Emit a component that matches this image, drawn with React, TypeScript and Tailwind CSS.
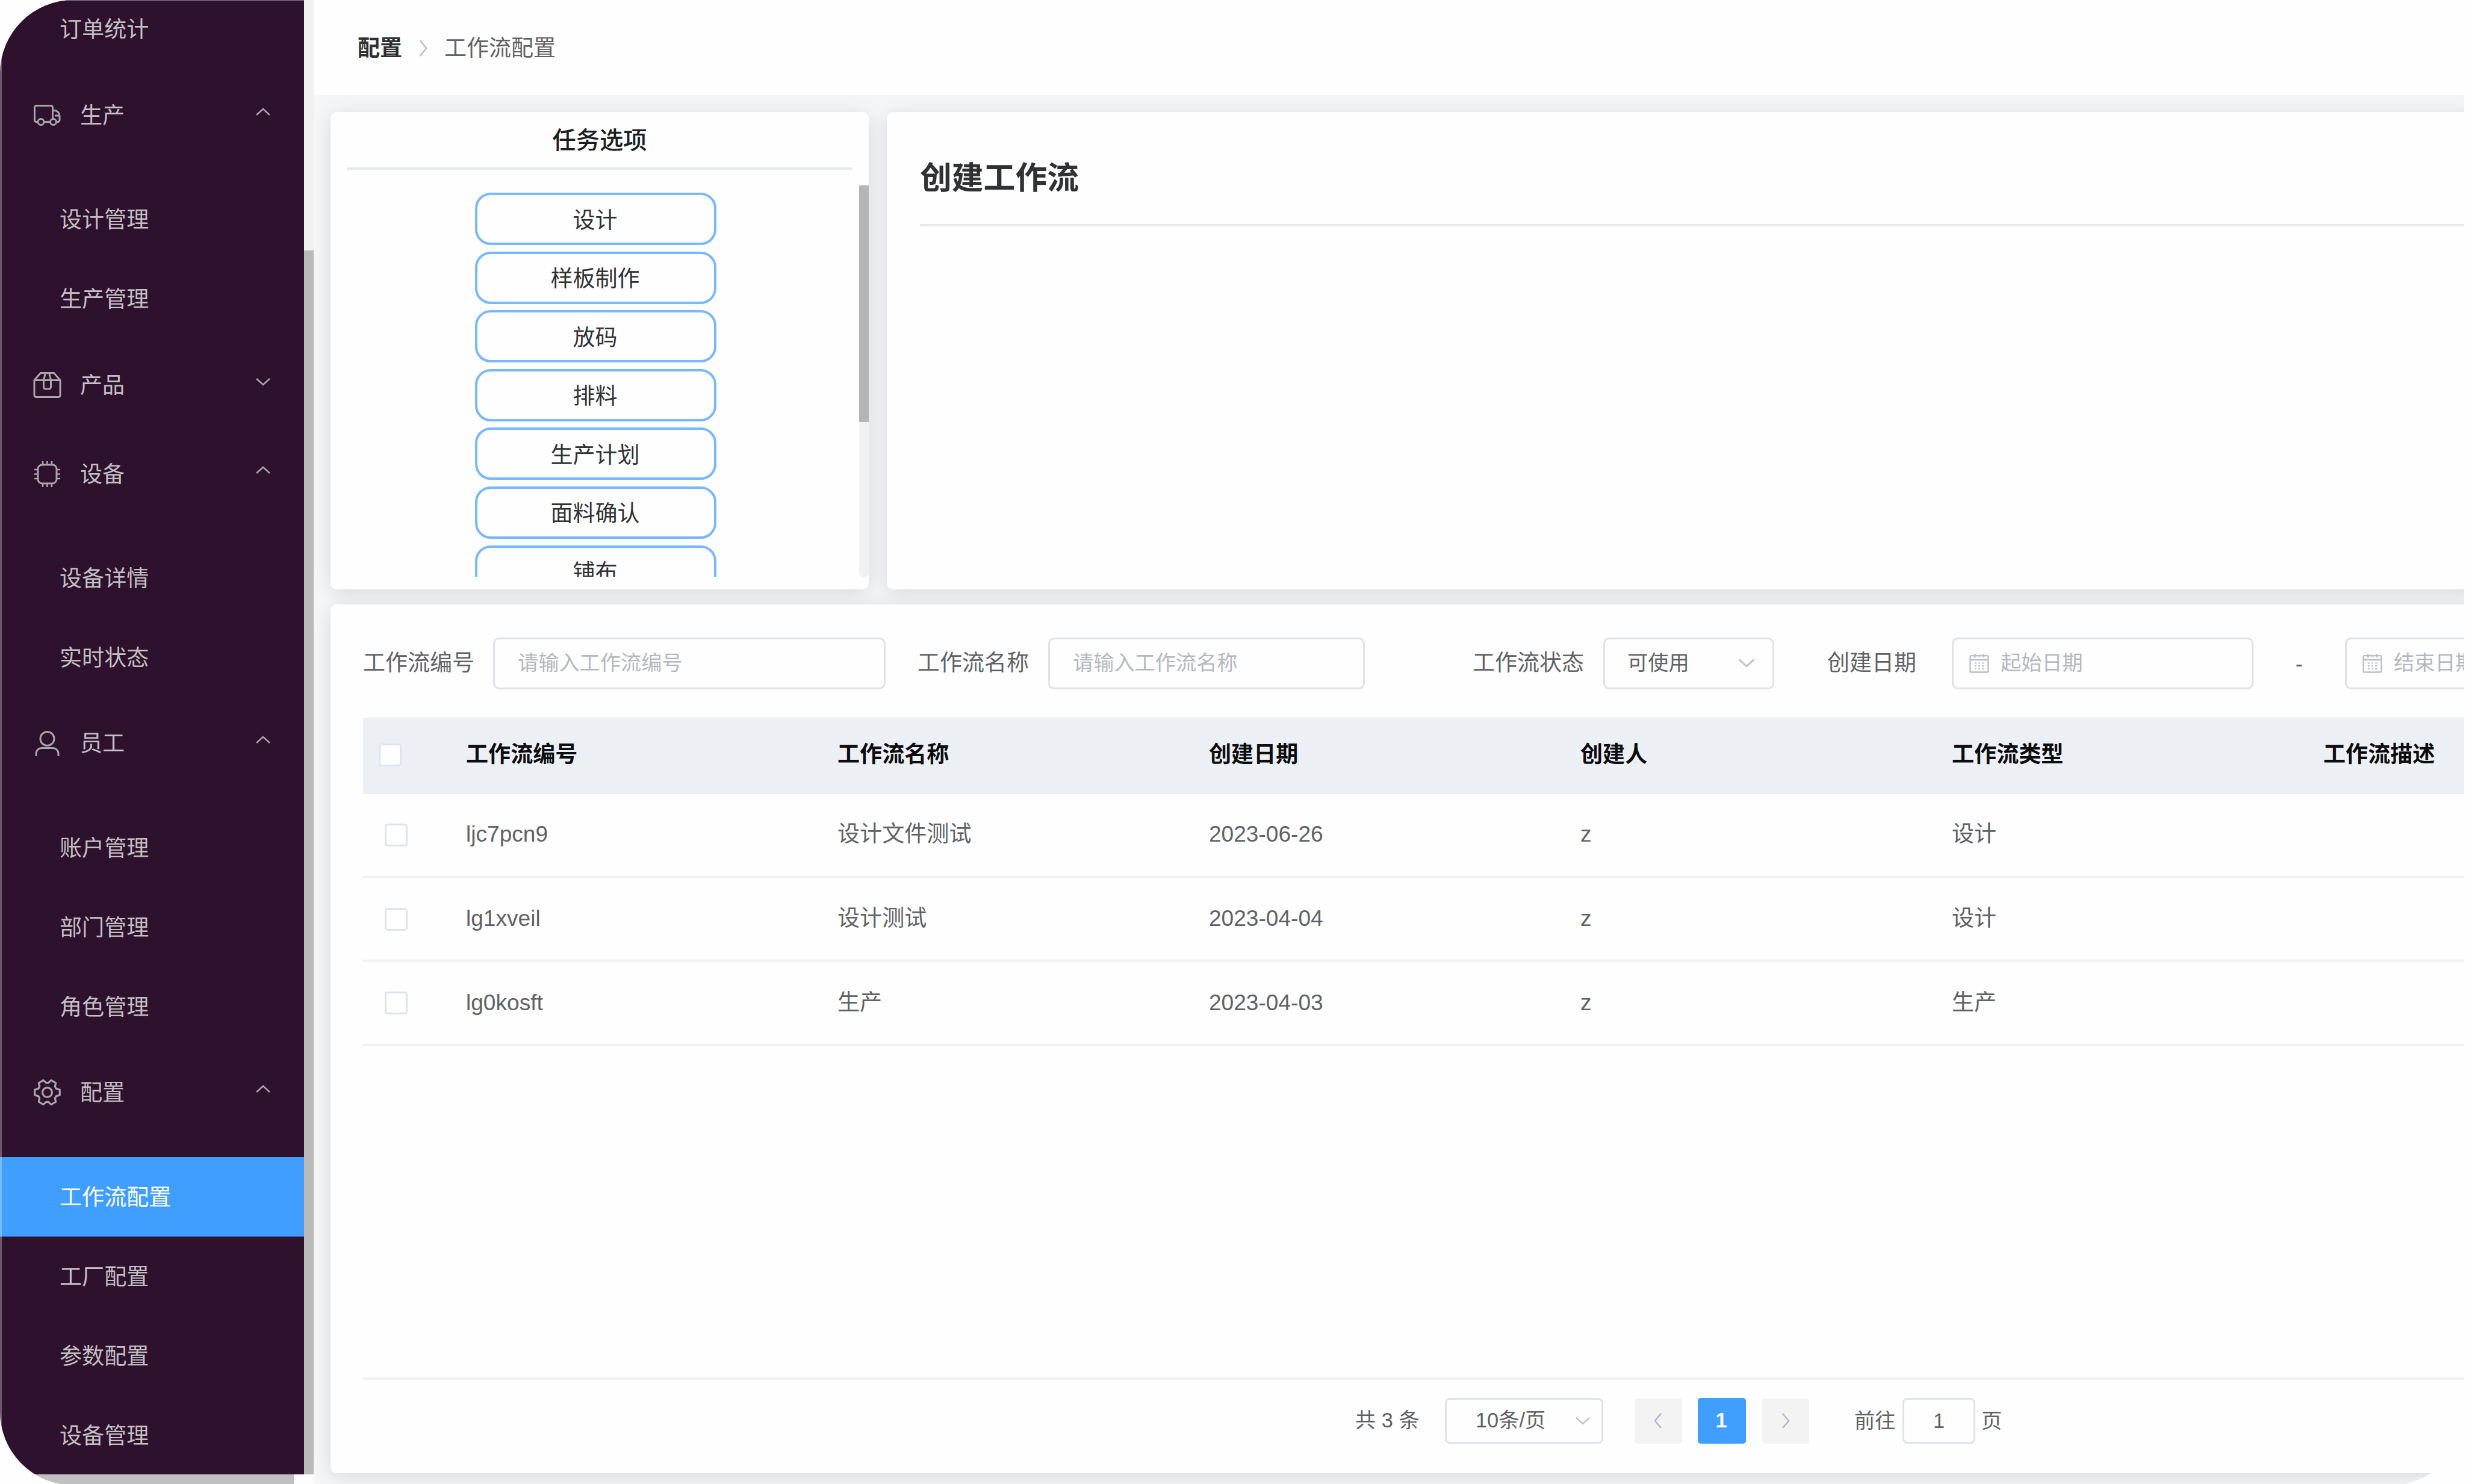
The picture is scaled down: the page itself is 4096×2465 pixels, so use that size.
import React from "react";

const SETTING_PATH =
  "M600.704 64a32 32 0 0 1 30.464 22.208l35.2 109.376c14.784 7.232 28.928 15.36 42.432 24.512l112.384-24.192a32 32 0 0 1 34.432 15.36L944.32 364.8a32 32 0 0 1-4.032 37.504l-77.12 85.12a357.12 357.12 0 0 1 0 49.024l77.12 85.248a32 32 0 0 1 4.032 37.504l-88.704 153.6a32 32 0 0 1-34.432 15.296L708.8 803.904c-13.44 9.088-27.648 17.28-42.368 24.512l-35.264 109.376A32 32 0 0 1 600.704 960H423.296a32 32 0 0 1-30.464-22.208L357.696 828.48a351.616 351.616 0 0 1-42.56-24.64l-112.32 24.256a32 32 0 0 1-34.432-15.36L79.68 659.2a32 32 0 0 1 4.032-37.504l77.12-85.248a357.12 357.12 0 0 1 0-48.896l-77.12-85.248A32 32 0 0 1 79.68 364.8l88.704-153.6a32 32 0 0 1 34.432-15.296l112.32 24.256c13.568-9.152 27.776-17.408 42.56-24.64l35.2-109.312A32 32 0 0 1 423.232 64H600.64zm-23.424 64H446.72l-36.352 113.088-24.512 11.968a294.113 294.113 0 0 0-34.816 20.096l-22.656 15.36-116.224-25.088-65.28 113.152 79.68 88.192-1.92 27.136a293.12 293.12 0 0 0 0 40.192l1.92 27.136-79.808 88.192 65.344 113.152 116.224-25.024 22.656 15.296a294.113 294.113 0 0 0 34.816 20.096l24.512 11.968L446.72 896h130.688l36.48-113.152 24.448-11.904a288.282 288.282 0 0 0 34.752-20.096l22.592-15.296 116.288 25.024 65.28-113.152-79.744-88.192 1.92-27.136a293.12 293.12 0 0 0 0-40.256l-1.92-27.136 79.808-88.128-65.344-113.152-116.288 24.96-22.592-15.232a287.616 287.616 0 0 0-34.752-20.096l-24.448-11.904L577.344 128zM512 320a192 192 0 1 1 0 384 192 192 0 0 1 0-384zm0 64a128 128 0 1 0 0 256 128 128 0 0 0 0-256z";

function MenuIcon({ name }: { name: string }) {
  const cls = "ml-[53px] size-[51px] shrink-0";
  if (name === "setting") {
    return (
      <svg viewBox="0 0 1024 1024" className={`${cls} fill-[#a9a5ac]`}>
        <path d={SETTING_PATH} fillRule="evenodd" transform="rotate(90 512 512)" />
      </svg>
    );
  }
  return (
    <svg viewBox="0 0 51 51" className={`${cls} fill-none stroke-[#a9a5ac]`} strokeWidth="3">
      {name === "van" && (
        <>
          <path d="M9.500 36.500H7.500a3 3 0 0 1-3-3V12.500a3 3 0 0 1 3-3h24a3 3 0 0 1 3 3v18M20.500 36.500h9M40.500 36.500h2.500a3 3 0 0 0 3-3v-7a9 9 0 0 0-9-9h-2.500M38 26h8" />
          <circle cx="15" cy="36.500" r="5" />
          <circle cx="35.500" cy="36.500" r="5" />
        </>
      )}
      {name === "box" && (
        <>
          <path d="M4 17.500 14.500 5.500h22L47 17.500v25a3 3 0 0 1-3 3H7a3 3 0 0 1-3-3zM4 17.500h43" />
          <path d="M22.500 5.500 19.500 17.500v11.500a3 3 0 0 0 3 3h6a3 3 0 0 0 3-3V17.500L28.500 5.500" />
        </>
      )}
      {name === "cpu" && (
        <>
          <rect x="10" y="10" width="31" height="31" rx="7" />
          <path
            d="M18 4v6M25.500 4v6M33 4v6M18 41v6M25.500 41v6M33 41v6M4 18h6M4 25.500h6M4 33h6M41 18h6M41 25.500h6M41 33h6"
            strokeWidth="2.600"
          />
        </>
      )}
      {name === "user" && (
        <>
          <circle cx="25.500" cy="17" r="11.500" />
          <path d="M7 46v-4a9.500 9.500 0 0 1 9.500-9.500h18a9.500 9.500 0 0 1 9.500 9.500v4" />
        </>
      )}
    </svg>
  );
}

function Chevron({ dir, className }: { dir: "up" | "down" | "left" | "right"; className: string }) {
  const points = {
    up: "1,12 12,2 23,12",
    down: "1,2 12,12 23,2",
    right: "2,1 12,13 2,25",
    left: "12,1 2,13 12,25",
  }[dir];
  const vertical = dir === "up" || dir === "down";
  return (
    <svg viewBox={vertical ? "0 0 24 14" : "0 0 14 26"} className={`shrink-0 fill-none ${className}`}>
      <polyline points={points} stroke="currentColor" strokeWidth="2.6" />
    </svg>
  );
}

const MENU = [
  { icon: "van", title: "生产", open: true, items: ["设计管理", "生产管理"] },
  { icon: "box", title: "产品", open: false, items: [] },
  { icon: "cpu", title: "设备", open: true, items: ["设备详情", "实时状态"] },
  { icon: "user", title: "员工", open: true, items: ["账户管理", "部门管理", "角色管理"] },
  { icon: "setting", title: "配置", open: true, items: ["工作流配置", "工厂配置", "参数配置", "设备管理"] },
];

function SubItem({ label }: { label: string }) {
  const active = label === "工作流配置";
  return (
    <div
      className={`flex h-[132px] items-center pt-[2px] pl-[99px] ${active ? "bg-[#409eff] text-white" : "text-[#c3bfc4]"}`}
    >
      {label}
    </div>
  );
}

function Sidebar() {
  return (
    <aside className="relative z-10 flex w-[521px] shrink-0 flex-col bg-[#fdfdfd]">
      <div className="flex h-[2449px]">
        <nav className="h-full w-[505px] overflow-hidden border-t-2 border-[#6d5a6d] bg-[#2e112d] text-[37.1px] leading-none">
          <div className="-mt-[19px]">
            <SubItem label="订单统计" />
          </div>
          <div className="h-[3px]" />
          {MENU.map((group) => (
            <div key={group.title}>
              <div className="flex h-[147.5px] items-center text-[#c3bfc4]">
                <MenuIcon name={group.icon} />
                <span className="mt-[2px] ml-[29px]">{group.title}</span>
                <Chevron
                  dir={group.open ? "up" : "down"}
                  className="mr-[56px] mb-[12px] ml-auto h-[14px] w-[24px] text-[#a9a5ac]"
                />
              </div>
              {group.items.length > 0 && (
                <div className="pt-[33.4px] pb-[3px]">
                  {group.items.map((item) => (
                    <SubItem key={item} label={item} />
                  ))}
                </div>
              )}
            </div>
          ))}
        </nav>
        <div className="w-4 bg-[#f1f1f1] pt-[416px]">
          <div className="h-full bg-[#b9b9b9]" />
        </div>
      </div>
      <div className="flex h-4">
        <div className="w-[488px] bg-[#c0c0c0]" />
      </div>
      <div className="absolute top-0 left-0 h-full w-[3px] bg-white/30" />
    </aside>
  );
}

function Header() {
  return (
    <header className="relative z-10 flex h-[158px] shrink-0 items-center bg-[#fefefe] pt-[2px] pl-[73px] text-[37px] leading-none">
      <span className="font-bold text-[#303133]">配置</span>
      <Chevron dir="right" className="mx-[27px] h-[28px] w-[16px] text-[#c0c4cc]" />
      <span className="text-[#606266]">工作流配置</span>
    </header>
  );
}

const TASKS = ["设计", "样板制作", "放码", "排料", "生产计划", "面料确认", "铺布"];

function TaskPanel() {
  return (
    <section className="flex w-[894px] shrink-0 flex-col rounded-[10px] bg-[#fefefe] shadow-[0_5px_32px_rgba(0,0,0,0.12)]">
      <div className="mx-[27px] flex h-[96px] items-center justify-center border-b-[4px] border-[#e6e8f0] pt-[3px] text-[39.3px] leading-none font-medium text-[#1d1e20]">
        任务选项
      </div>
      <div className="mt-[26px] flex h-[650px]">
        <div className="flex flex-1 flex-col items-center gap-[10.6px] overflow-hidden pt-[12px]">
          {TASKS.map((task) => (
            <div
              key={task}
              className="ml-[3px] flex h-[87px] w-[401px] shrink-0 items-center justify-center rounded-[26px] border-[4px] border-[#79b8ff] pt-[5px] pr-[2px] text-[37px] leading-none text-[#303133]"
            >
              {task}
            </div>
          ))}
        </div>
        <div className="w-4 rounded-b-[6px] bg-[#f1f1f1]">
          <div className="h-[393px] bg-[#b5b5b5]" />
        </div>
      </div>
    </section>
  );
}

function CreatePanel() {
  return (
    <section className="-mr-5 flex-1 rounded-[10px] bg-[#fefefe] pl-[55px] shadow-[0_5px_32px_rgba(0,0,0,0.12)]">
      <h2 className="flex h-[190px] items-center border-b-[4px] border-[#e6e8f0] pt-[34px] text-[52.8px] leading-none font-bold text-[#303133]">
        创建工作流
      </h2>
    </section>
  );
}

function CalendarIcon() {
  return (
    <svg viewBox="0 0 32 32" className="size-[33px] shrink-0 fill-none stroke-[#bcc0c9]">
      <rect x="1.500" y="4" width="29" height="26.500" rx="1.500" strokeWidth="2.400" />
      <path d="M1.500 10.500h29M9 1v6M23 1v6M13 4h6" strokeWidth="2.800" />
      <path
        d="M8.500 16h3M14.500 16h3M20.500 16h3M8.500 20.500h3M14.500 20.500h3M20.500 20.500h3M8.500 25h3M14.500 25h3M20.500 25h3"
        strokeWidth="2"
      />
    </svg>
  );
}

const FIELD =
  "flex h-[86px] shrink-0 items-center rounded-[10px] border-[3px] border-[#dfe2ea] pb-[2px] text-[34.2px] text-[#b4b8c2]";
const LABEL = "shrink-0 pb-[2px] text-[37px]";

function Filters() {
  return (
    <div className="flex h-[86px] items-center leading-none text-[#606266]">
      <span className={`${LABEL} w-[216px]`}>工作流编号</span>
      <div className={`${FIELD} w-[652px] pl-[38px]`}>请输入工作流编号</div>
      <span className={`${LABEL} ml-[53px] w-[217px]`}>工作流名称</span>
      <div className={`${FIELD} w-[526px] pl-[38px]`}>请输入工作流名称</div>
      <span className={`${LABEL} ml-[179px] w-[217px]`}>工作流状态</span>
      <div className={`${FIELD} w-[284px] justify-between pr-[29px] pl-[37px]`}>
        <span className="text-[#606266]">可使用</span>
        <Chevron dir="down" className="h-[16px] w-[28px] text-[#c0c4cc]" />
      </div>
      <span className={`${LABEL} ml-[88px] w-[207px]`}>创建日期</span>
      <div className={`${FIELD} w-[501px] gap-[19px] pl-[26px]`}>
        <CalendarIcon />
        起始日期
      </div>
      <span className="w-[152px] shrink-0 text-center text-[37px]">-</span>
      <div className={`${FIELD} w-[501px] gap-[19px] pl-[26px]`}>
        <CalendarIcon />
        结束日期
      </div>
    </div>
  );
}

const COLUMNS = ["工作流编号", "工作流名称", "创建日期", "创建人", "工作流类型", "工作流描述"];
const ROWS = [
  ["ljc7pcn9", "设计文件测试", "2023-06-26", "z", "设计", ""],
  ["lg1xveil", "设计测试", "2023-04-04", "z", "设计", ""],
  ["lg0kosft", "生产", "2023-04-03", "z", "生产", ""],
];
const GRID = "grid grid-cols-[171px_repeat(6,617px)] items-center leading-none text-[37.1px]";

function WorkflowTable() {
  return (
    <div className="mt-[47px] h-[1100px] border-b-[4px] border-[#eff1f7]">
      <div className={`${GRID} h-[127px] bg-[#ecf0f5] pb-[3px] font-bold text-[#0d0d0f]`}>
        <div className="ml-[26px] h-[38px] w-[38px] rounded-[5px] border-[3px] border-[#dfe3ea] bg-white" />
        {COLUMNS.map((c) => (
          <span key={c}>{c}</span>
        ))}
      </div>
      {ROWS.map((row) => (
        <div key={row[0]} className={`${GRID} h-[139.7px] border-b-[4px] border-[#eff1f7] text-[#606266]`}>
          <div className="ml-[36px] h-[38px] w-[38px] rounded-[5px] border-[3px] border-[#dfe3ea] bg-white" />
          {row.map((cell, i) => (
            <span key={i} className="pb-[2px]">
              {cell}
            </span>
          ))}
        </div>
      ))}
    </div>
  );
}

function Pagination() {
  return (
    <div className="mt-[30px] flex h-[76px] items-center pl-[1648px] text-[34.3px] leading-none text-[#606266]">
      <span className="w-[149px] shrink-0 pb-[2px]">共 3 条</span>
      <div className="flex h-[76px] w-[263px] items-center justify-between rounded-[8px] border-[3px] border-[#dfe2ea] pr-[19px] pb-[1px] pl-[48px]">
        <span>10条/页</span>
        <Chevron dir="down" className="h-[14px] w-[24px] text-[#c0c4cc]" />
      </div>
      <div className="ml-[52px] flex h-[75px] w-[79px] items-center justify-center rounded-[5px] bg-[#f3f3f4] pr-[2px]">
        <Chevron dir="left" className="h-[26px] w-[14px] text-[#b4b8c2]" />
      </div>
      <div className="ml-[26px] flex h-[76px] w-[80px] items-center justify-center rounded-[5px] bg-[#409eff] pr-[2px] pb-[2px] font-bold text-white">
        1
      </div>
      <div className="ml-[26px] flex h-[75px] w-[79px] items-center justify-center rounded-[5px] bg-[#f3f3f4]">
        <Chevron dir="right" className="h-[26px] w-[14px] text-[#b4b8c2]" />
      </div>
      <span className="ml-[75px] w-[80px] shrink-0 pt-[1px]">前往</span>
      <div className="flex h-[76px] w-[121px] items-center justify-center rounded-[8px] border-[3px] border-[#dfe2ea]">
        1
      </div>
      <span className="ml-[10px] pt-[1px]">页</span>
    </div>
  );
}

export default function App() {
  return (
    <div className="h-[2465px] w-[4096px] overflow-hidden bg-[#fefefe] font-['Liberation_Sans','Noto_Sans_CJK_SC',sans-serif]">
      <div className="flex h-[2467px] w-[4093px] overflow-hidden rounded-[122px] bg-[#f5f6f8]">
        <Sidebar />
        <div className="flex min-w-0 flex-1 flex-col overflow-hidden">
          <Header />
          <main className="flex flex-col gap-[25px] pt-[28px] pl-[28px]">
            <div className="flex h-[793px] gap-[30px]">
              <TaskPanel />
              <CreatePanel />
            </div>
            <section className="-mr-5 h-[1443px] overflow-hidden rounded-[10px] bg-[#fefefe] pt-[55px] pl-[54px] shadow-[0_5px_32px_rgba(0,0,0,0.12)]">
              <Filters />
              <WorkflowTable />
              <Pagination />
            </section>
          </main>
        </div>
      </div>
    </div>
  );
}
